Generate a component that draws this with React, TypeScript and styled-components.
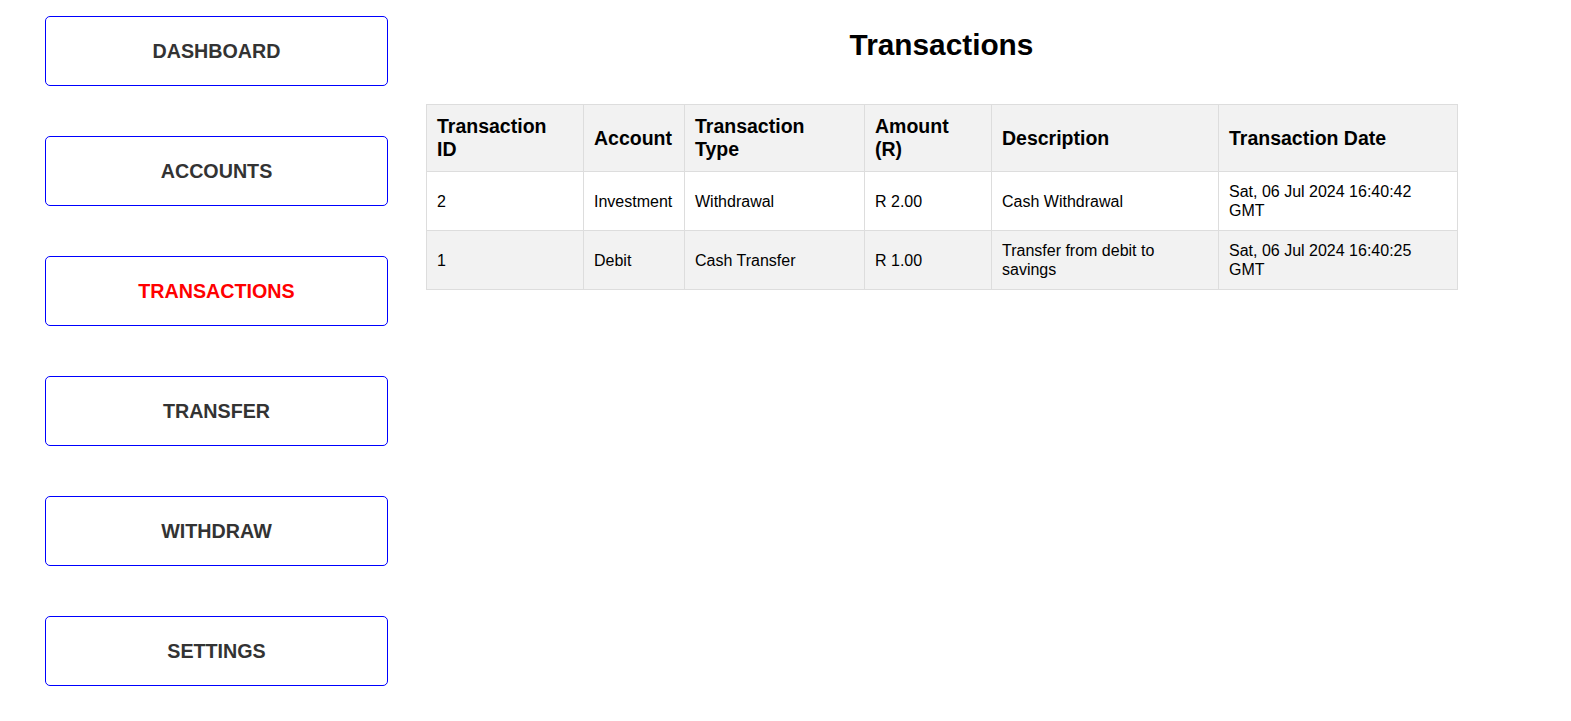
import React from "react";
import styled, { createGlobalStyle } from "styled-components";

const GlobalStyle = createGlobalStyle`
  html, body {
    margin: 0;
    padding: 0;
    background: #ffffff;
    font-family: "Liberation Sans", Arial, sans-serif;
  }
`;

const Page = styled.div`
  display: flex;
  flex-direction: row;
  align-items: flex-start;
  min-height: 721px;
`;

const Sidebar = styled.nav`
  display: flex;
  flex-direction: column;
  gap: 50px;
  padding: 16px 0 0 45px;
`;

const NavButton = styled.button<{ $active?: boolean }>`
  width: 343px;
  height: 70px;
  box-sizing: border-box;
  border: 1px solid #0000ff;
  border-radius: 5px;
  background: #ffffff;
  font-family: "Liberation Sans", Arial, sans-serif;
  font-weight: bold;
  font-size: 19.7px;
  color: ${(p) => (p.$active ? "#ff0000" : "#333333")};
  display: flex;
  align-items: center;
  justify-content: center;
  padding: 0;
  cursor: pointer;
`;

const Main = styled.main`
  margin-left: 38px;
  width: 1031px;
  padding-top: 28px;
  display: flex;
  flex-direction: column;
  align-items: stretch;
`;

const Title = styled.h1`
  margin: 0;
  font-size: 29.8px;
  line-height: 34px;
  font-weight: bold;
  color: #000000;
  text-align: center;
`;

const Table = styled.table`
  margin-top: 42px;
  width: 1031px;
  table-layout: fixed;
  border-collapse: collapse;
  color: #000000;
`;

const HeadCell = styled.th`
  background: #f2f2f2;
  border: 1px solid #dddddd;
  padding: 10px 14px 10px 10px;
  font-size: 19.5px;
  line-height: 23px;
  font-weight: bold;
  text-align: left;
  vertical-align: middle;
`;

const Row = styled.tr<{ $shaded?: boolean }>`
  background: ${(p) => (p.$shaded ? "#f2f2f2" : "#ffffff")};
`;

const Cell = styled.td`
  border: 1px solid #dddddd;
  padding: 10px;
  font-size: 16px;
  line-height: 19px;
  text-align: left;
  vertical-align: middle;
`;

const navItems = ["DASHBOARD", "ACCOUNTS", "TRANSACTIONS", "TRANSFER", "WITHDRAW", "SETTINGS"];

const columns = [
  { label: "Transaction ID", width: 157 },
  { label: "Account", width: 101 },
  { label: "Transaction Type", width: 180 },
  { label: "Amount (R)", width: 127 },
  { label: "Description", width: 227 },
  { label: "Transaction Date", width: 239 },
];

const rows = [
  {
    id: "2",
    account: "Investment",
    type: "Withdrawal",
    amount: "R 2.00",
    description: "Cash Withdrawal",
    date: "Sat, 06 Jul 2024 16:40:42 GMT",
  },
  {
    id: "1",
    account: "Debit",
    type: "Cash Transfer",
    amount: "R 1.00",
    description: "Transfer from debit to savings",
    date: "Sat, 06 Jul 2024 16:40:25 GMT",
  },
];

export default function App() {
  return (
    <>
      <GlobalStyle />
      <Page>
        <Sidebar>
          {navItems.map((item) => (
            <NavButton key={item} $active={item === "TRANSACTIONS"}>
              {item}
            </NavButton>
          ))}
        </Sidebar>
        <Main>
          <Title>Transactions</Title>
          <Table>
            <colgroup>
              {columns.map((c) => (
                <col key={c.label} style={{ width: c.width }} />
              ))}
            </colgroup>
            <thead>
              <tr>
                {columns.map((c) => (
                  <HeadCell key={c.label}>{c.label}</HeadCell>
                ))}
              </tr>
            </thead>
            <tbody>
              {rows.map((r, i) => (
                <Row key={r.id} $shaded={i % 2 === 1}>
                  <Cell>{r.id}</Cell>
                  <Cell>{r.account}</Cell>
                  <Cell>{r.type}</Cell>
                  <Cell>{r.amount}</Cell>
                  <Cell>{r.description}</Cell>
                  <Cell>{r.date}</Cell>
                </Row>
              ))}
            </tbody>
          </Table>
        </Main>
      </Page>
    </>
  );
}
